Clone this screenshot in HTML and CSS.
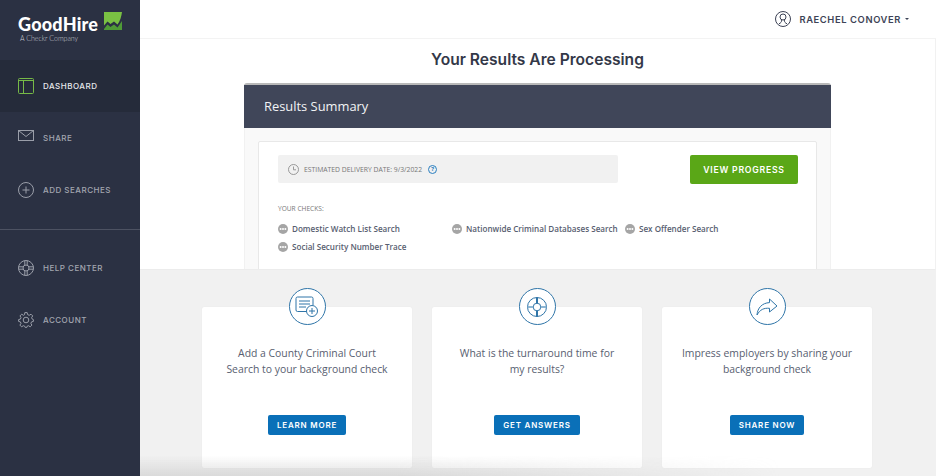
FILE: index.html
```html
<!DOCTYPE html>
<html lang="en">
<head>
    <meta charset="UTF-8">
    <meta name="viewport" content="width=device-width, initial-scale=1.0">
    <title>GoodHire Dashboard</title>
    <link rel="stylesheet" href="styles.css">
</head>
<body>
    <div class="app">
        <aside class="sidebar">
            <div class="logo">
                <div class="logo-text">
                    <div class="logo-name">GoodHire</div>
                    <div class="logo-sub">A Checkr Company</div>
                </div>
                <svg class="logo-mark" width="18" height="18" viewBox="0 0 18 18">
                    <path d="M0 0H18C17.5 4.5 16 9 13.5 12.5L10 9.5L6.5 12L3.5 9.5L0 13.5Z" fill="#7ac143"/>
                    <path d="M0 17L3.5 12.5L6.5 15L10 12.5L13.5 15.5L18 9V18H0Z" fill="#4f9a37"/>
                </svg>
            </div>
            <nav>
                <a class="nav-item active">
                    <svg width="16" height="16" viewBox="0 0 16 16" fill="none" stroke="#76b947" stroke-width="1">
                        <rect x="0.5" y="0.5" width="15" height="15" rx="1"/>
                        <path d="M0.5 2.5H15.5M5.5 2.5V15.5"/>
                    </svg>
                    <span>DASHBOARD</span>
                </a>
                <a class="nav-item">
                    <svg width="16" height="16" viewBox="0 0 16 16" fill="none" stroke="#9a9ea9" stroke-width="1">
                        <rect x="0.5" y="0.5" width="15" height="10"/>
                        <path d="M0.5 0.5L8 6.5L15.5 0.5"/>
                    </svg>
                    <span>SHARE</span>
                </a>
                <a class="nav-item">
                    <svg width="16" height="16" viewBox="0 0 16 16" fill="none" stroke="#9a9ea9" stroke-width="1">
                        <circle cx="8" cy="8" r="7.5"/>
                        <path d="M8 4.5V11.5M4.5 8H11.5"/>
                    </svg>
                    <span>ADD SEARCHES</span>
                </a>
            </nav>
            <hr class="nav-divider">
            <nav>
                <a class="nav-item">
                    <svg width="16" height="16" viewBox="0 0 16 16" fill="none" stroke="#9a9ea9" stroke-width="1">
                        <circle cx="8" cy="8" r="7.5"/>
                        <circle cx="8" cy="8" r="3"/>
                        <path d="M6.8 0.6V5.2M9.2 0.6V5.2M6.8 10.8V15.4M9.2 10.8V15.4M0.6 6.8H5.2M0.6 9.2H5.2M10.8 6.8H15.4M10.8 9.2H15.4"/>
                    </svg>
                    <span>HELP CENTER</span>
                </a>
                <a class="nav-item">
                    <svg width="16" height="16" viewBox="0 0 16 16" fill="none" stroke="#9a9ea9" stroke-width="1">
                        <circle cx="8" cy="8" r="2.8"/>
                        <path d="M6.8 0.6H9.2L9.6 2.6L11.2 3.3L13 2.2L14.7 3.9L13.6 5.7L14.3 7.2L15.4 7.6V9.4L13.5 9.9L12.9 11.4L13.9 13.1L12.2 14.8L10.5 13.7L9.1 14.3L8.8 15.4H7.2L6.8 14.3L5.3 13.7L3.6 14.8L1.9 13.1L3 11.4L2.4 9.9L0.6 9.4V7.6L2.4 7.1L3 5.6L2 3.9L3.7 2.2L5.4 3.3L6.5 2.7Z"/>
                    </svg>
                    <span>ACCOUNT</span>
                </a>
            </nav>
        </aside>

        <main class="main">
            <header class="topbar">
                <svg width="16" height="16" viewBox="0 0 16 16" fill="none" stroke="#3d4356" stroke-width="1">
                    <circle cx="8" cy="8" r="7.5"/>
                    <circle cx="8" cy="6" r="3"/>
                    <path d="M6.7 8.8C6.7 11 5.8 12 4 12.8M9.3 8.8C9.3 11 10.2 12 12 12.8"/>
                </svg>
                <span class="user-name">RAECHEL CONOVER</span>
                <span class="caret"></span>
            </header>

            <section class="results">
                <h1>Your Results Are Processing</h1>
                <div class="panel">
                    <div class="panel-head">Results Summary</div>
                    <div class="panel-body">
                        <div class="summary-card">
                            <div class="summary-top">
                                <div class="delivery">
                                    <svg width="11" height="11" viewBox="0 0 11 11" fill="none" stroke="#8f8f8f" stroke-width="0.9">
                                        <circle cx="5.5" cy="5.5" r="5"/>
                                        <path d="M5.5 2.5V5.8H8"/>
                                    </svg>
                                    <span>ESTIMATED DELIVERY DATE: 9/3/2022</span>
                                    <span class="help-dot">?</span>
                                </div>
                                <button class="btn-green">VIEW PROGRESS</button>
                            </div>
                            <div class="checks-label">YOUR CHECKS:</div>
                            <ul class="checks">
                                <li class="w1"><i class="dots"></i>Domestic Watch List Search</li>
                                <li class="w2"><i class="dots"></i>Nationwide Criminal Databases Search</li>
                                <li><i class="dots"></i>Sex Offender Search</li>
                                <li class="w1"><i class="dots"></i>Social Security Number Trace</li>
                            </ul>
                        </div>
                    </div>
                </div>
            </section>

            <section class="promos">
                <div class="promo">
                    <div class="promo-icon">
                        <svg width="24" height="22" viewBox="0 0 24 22" fill="none" stroke="#2f75a8" stroke-width="1">
                            <path d="M13 15.5H2.5A1.5 1.5 0 0 1 1 14V2.5A1.5 1.5 0 0 1 2.5 1H16.5A1.5 1.5 0 0 1 18 2.5V9"/>
                            <path d="M4 5H15M4 8H15M4 11H11"/>
                            <circle cx="17" cy="15" r="5.5" fill="#fff"/>
                            <path d="M17 12V18M14 15H20"/>
                        </svg>
                    </div>
                    <p>Add a County Criminal Court<br>Search to your background check</p>
                    <button class="btn-blue">LEARN MORE</button>
                </div>
                <div class="promo">
                    <div class="promo-icon">
                        <svg width="22" height="22" viewBox="0 0 22 22" fill="none" stroke="#2f75a8" stroke-width="1">
                            <circle cx="11" cy="11" r="9.5"/>
                            <circle cx="11" cy="11" r="3.8"/>
                            <path d="M11 1.5V7.2M11 14.8V20.5" stroke-width="2"/>
                            <path d="M1.5 11H7.2M14.8 11H20.5" stroke="#8db6d3" stroke-width="2"/>
                        </svg>
                    </div>
                    <p>What is the turnaround time for<br>my results?</p>
                    <button class="btn-blue">GET ANSWERS</button>
                </div>
                <div class="promo">
                    <div class="promo-icon">
                        <svg width="22" height="18" viewBox="0 0 22 18" fill="none" stroke="#2f75a8" stroke-width="1">
                            <path d="M13.5 1L21 8L13.5 14V10.3C8 9.8 4 11.5 1 17C1.5 10 6 5 13.5 4.6Z" stroke-linejoin="round"/>
                        </svg>
                    </div>
                    <p>Impress employers by sharing your<br>background check</p>
                    <button class="btn-blue">SHARE NOW</button>
                </div>
            </section>
        </main>
    </div>
    <div class="bottom-fade"></div>
</body>
</html>
```

FILE: styles.css
```css
* {
    box-sizing: border-box;
}
html, body {
    height: 100%;
}
body {
    margin: 0;
    overflow: hidden;
    background: #f1f1f1;
    color: #3d4356;
    font-family: "Open Sans", sans-serif;
}
.app {
    display: flex;
    height: 476px;
}

/* sidebar */
.sidebar {
    width: 140px;
    flex-shrink: 0;
    background: #2b3143;
}
.logo {
    display: flex;
    height: 60px;
    padding: 12px 0 0 18px;
    gap: 6px;
}
.logo-name {
    margin-top: 4px;
    color: #fff;
    font-family: Lato, sans-serif;
    font-size: 18px;
    font-weight: 900;
    line-height: 17px;
    letter-spacing: 0.2px;
}
.logo-sub {
    margin: 1px 0 0 2px;
    color: #c9ccd3;
    font-family: Lato, sans-serif;
    font-size: 7px;
    font-weight: 300;
    line-height: 9px;
}
.nav-item {
    display: flex;
    align-items: center;
    height: 52px;
    padding-left: 18px;
    gap: 9px;
    color: #a3a6b0;
    font-family: Inter, sans-serif;
    font-size: 8px;
    font-weight: 500;
    letter-spacing: 0.5px;
}
.nav-item.active {
    background: #252b3a;
    color: #e8e9ec;
}
.nav-divider {
    height: 1px;
    margin: 13px 0 12px;
    border: 0;
    background: #4d5262;
}

/* top bar and results */
.main {
    display: flex;
    flex-direction: column;
    flex: 1;
    min-width: 0;
}
.topbar {
    display: flex;
    align-items: center;
    justify-content: flex-end;
    flex-shrink: 0;
    height: 39px;
    padding-right: 27px;
    background: #fff;
    border-bottom: 1px solid #f3f3f3;
}
.user-name {
    margin-left: 8px;
    font-family: Inter, sans-serif;
    font-size: 9.4px;
    font-weight: 600;
    letter-spacing: 0.6px;
}
.caret {
    margin-left: 4px;
    border: 2.5px solid transparent;
    border-top-color: #3d4356;
    border-bottom-width: 0;
}
.results {
    height: 231px;
    flex-shrink: 0;
    overflow: hidden;
    background: #fff;
    border-right: 1px solid #f1f1f1;
    border-bottom: 1px solid #ececec;
}
h1 {
    margin: 12px 0 0;
    color: #333848;
    font-family: Inter, sans-serif;
    font-size: 15.6px;
    font-weight: 600;
    line-height: 18px;
    text-align: center;
}
.panel {
    width: 587px;
    margin: 14px 0 0 104px;
    border-top: 2px solid #b9b9b9;
    border-radius: 3px 3px 0 0;
    background: #f9f9f9;
}
.panel-head {
    height: 43px;
    padding-left: 20px;
    background: #404659;
    color: #f2f3f5;
    font-size: 12.9px;
    line-height: 42px;
}
.panel-body {
    padding: 13px 13px 0;
    border-right: 1px solid #f1f1f1;
    border-left: 1px solid #f1f1f1;
}
.summary-card {
    height: 140px;
    padding: 13px 18px 0 19px;
    border: 1px solid #e8e8e8;
    border-radius: 2px;
    background: #fff;
}
.summary-top {
    display: flex;
    justify-content: space-between;
}
.delivery {
    display: flex;
    align-items: center;
    width: 340px;
    height: 28px;
    padding-left: 10px;
    gap: 5px;
    border-radius: 2px;
    background: #f1f1f1;
    color: #777;
    font-size: 6.8px;
}
.help-dot {
    width: 9px;
    height: 9px;
    margin-left: 1px;
    border: 1px solid #2a7fc0;
    border-radius: 50%;
    color: #2a7fc0;
    font-size: 6px;
    font-weight: 700;
    line-height: 7px;
    text-align: center;
}
.btn-green {
    width: 108px;
    height: 29px;
    padding: 0;
    border: 0;
    border-radius: 2px;
    background: #5aa717;
    color: #fff;
    font-family: Inter, sans-serif;
    font-size: 8.7px;
    font-weight: 600;
    letter-spacing: 0.75px;
}
.checks-label {
    margin-top: 20px;
    color: #777;
    font-size: 6.6px;
    line-height: 10px;
}
.checks {
    display: flex;
    flex-wrap: wrap;
    margin: 6px 0 0;
    padding: 0;
    list-style: none;
    color: #585e70;
    font-size: 8.1px;
    font-weight: 600;
    line-height: 18px;
}
.checks li {
    display: flex;
    align-items: center;
    white-space: nowrap;
}
.checks .w1 {
    width: 174px;
}
.checks .w2 {
    width: 173px;
}
.checks li:nth-child(4) {
    width: 100%;
}
.dots {
    position: relative;
    width: 10px;
    height: 10px;
    margin-right: 4px;
    border-radius: 50%;
    background: #a5a5a5;
}
.dots::after {
    content: "";
    position: absolute;
    top: 4px;
    left: 4px;
    width: 2px;
    height: 2px;
    border-radius: 50%;
    background: #fff;
    box-shadow: 2.4px 0 #fff, -2.4px 0 #fff;
}

/* promo cards */
.promos {
    display: flex;
    flex: 1;
    gap: 20px;
    padding: 37px 0 0 62px;
}
.promo {
    position: relative;
    display: flex;
    flex-direction: column;
    align-items: center;
    width: 210px;
    height: 161px;
    padding-top: 38px;
    border-radius: 2px;
    background: #fff;
    box-shadow: 0 0 1px #ddd;
}
.promo-icon {
    position: absolute;
    top: -19px;
    left: 50%;
    display: flex;
    align-items: center;
    justify-content: center;
    width: 37px;
    height: 37px;
    margin-left: -18.5px;
    border: 1px solid #2f75a8;
    border-radius: 50%;
    background: #fff;
}
.promo p {
    height: 70px;
    margin: 0;
    color: #585e70;
    font-size: 10.4px;
    line-height: 16px;
    text-align: center;
}
.btn-blue {
    height: 20px;
    padding: 0 9px;
    border: 0;
    border-radius: 2px;
    background: #0a70b8;
    color: #fff;
    font-family: Inter, sans-serif;
    font-size: 8px;
    font-weight: 600;
    letter-spacing: 0.8px;
}

/* window shadow along the bottom of the shot */
.bottom-fade {
    position: absolute;
    left: 140px;
    bottom: 0;
    width: 640px;
    height: 20px;
    background: linear-gradient(to bottom, rgba(200, 200, 200, 0), rgba(200, 200, 200, 0.55));
    -webkit-mask-image: linear-gradient(to right, #000 40%, transparent);
    mask-image: linear-gradient(to right, #000 40%, transparent);
    pointer-events: none;
}
```
